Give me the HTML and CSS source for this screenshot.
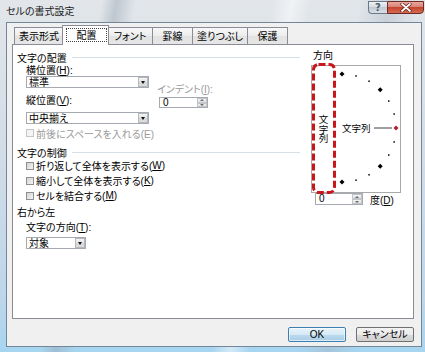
FILE: index.html
```html
<!DOCTYPE html>
<html lang="ja">
<head>
  <meta charset="utf-8">
  <title>セルの書式設定</title>
  <link rel="stylesheet" href="styles.css">
</head>
<body>
  <div class="window">
    <div class="titlebar">
      <span class="title">セルの書式設定</span>
      <div class="caption-buttons">
        <div class="cap-btn cap-help">?</div>
        <div class="cap-btn cap-close">
          <svg width="12" height="9" viewBox="0 0 12 9">
            <path d="M2 1 L10 8 M10 1 L2 8" stroke="#5a1d16" stroke-width="3.2" stroke-linecap="round"/>
            <path d="M2 1 L10 8 M10 1 L2 8" stroke="#fff" stroke-width="1.8" stroke-linecap="round"/>
          </svg>
        </div>
      </div>
    </div>

    <div class="client">
      <div class="tabs">
        <div class="tab tab-format">表示形式</div>
        <div class="tab tab-align tab-active"><span class="focus-ring">配置</span></div>
        <div class="tab tab-font">フォント</div>
        <div class="tab tab-border">罫線</div>
        <div class="tab tab-fill">塗りつぶし</div>
        <div class="tab tab-protect">保護</div>
      </div>

      <div class="panel">
        <div class="align-col">
          <div class="group-title">文字の配置</div>
          <div class="indented">
            <div class="position-row">
              <div class="position-left">
                <div class="label">横位置(<u>H</u>):</div>
                <div class="combo combo-wide"><span class="combo-value">標準</span><span class="combo-btn"></span></div>
                <div class="label gap-6">縦位置(<u>V</u>):</div>
                <div class="combo combo-wide gap-6"><span class="combo-value">中央揃え</span><span class="combo-btn"></span></div>
              </div>
              <div class="indent-box">
                <div class="label disabled">インデント(<u>I</u>):</div>
                <div class="spin indent-spin">
                  <span class="spin-value">0</span>
                  <span class="spin-btns"><span class="spin-up"></span><span class="spin-down"></span></span>
                </div>
              </div>
            </div>
            <div class="check check-space disabled"><span class="box"></span>前後にスペースを入れる(E)</div>
          </div>

          <div class="group-title control-title">文字の制御</div>
          <div class="indented">
            <div class="check"><span class="box"></span>折り返して全体を表示する(<u>W</u>)</div>
            <div class="check"><span class="box"></span>縮小して全体を表示する(<u>K</u>)</div>
            <div class="check"><span class="box"></span>セルを結合する(<u>M</u>)</div>
          </div>

          <div class="group-title rtl-title">右から左</div>
          <div class="indented">
            <div class="label direction-label">文字の方向(<u>T</u>):</div>
            <div class="combo combo-narrow"><span class="combo-value">対象</span><span class="combo-btn"></span></div>
          </div>
        </div>

        <div class="orient-col">
          <div class="orient-title">方向</div>
          <div class="orient-wrap">
            <div class="orient-box">
              <div class="vertical-cell">文字列</div>
              <svg class="dial" width="65" height="126" viewBox="0 0 65 126">
                <g fill="#000">
                  <path d="M7 5.5 L9.5 8 L7 10.5 L4.5 8 Z"/>
                  <path d="M45.2 21.3 L47.7 23.8 L45.2 26.3 L42.7 23.8 Z"/>
                  <path d="M45.2 97.7 L47.7 100.2 L45.2 102.7 L42.7 100.2 Z"/>
                  <path d="M7 113.5 L9.5 116 L7 118.5 L4.5 116 Z"/>
                  <rect x="20.3" y="9.2" width="1.5" height="1.5"/>
                  <rect x="33.3" y="14.5" width="1.5" height="1.5"/>
                  <rect x="53" y="34.3" width="1.5" height="1.5"/>
                  <rect x="58.4" y="47.3" width="1.5" height="1.5"/>
                  <rect x="58.4" y="75.2" width="1.5" height="1.5"/>
                  <rect x="53" y="88.3" width="1.5" height="1.5"/>
                  <rect x="33.3" y="108" width="1.5" height="1.5"/>
                  <rect x="20.3" y="113.4" width="1.5" height="1.5"/>
                </g>
                <text x="7" y="65.5" class="dial-text">文字列</text>
                <line x1="39" y1="62" x2="57" y2="62" stroke="#777" stroke-width="1.4"/>
                <path d="M61 59.5 L63.5 62 L61 64.5 L58.5 62 Z" fill="#a8262a"/>
              </svg>
            </div>
            <svg class="highlight" width="24" height="131" viewBox="0 0 24 131">
              <rect x="1.5" y="1.5" width="21" height="128" rx="5" fill="none" stroke="#c8161d" stroke-width="3" stroke-dasharray="7 3"/>
            </svg>
          </div>
          <div class="degree-row">
            <div class="spin degree-spin">
              <span class="spin-value">0</span>
              <span class="spin-btns"><span class="spin-up"></span><span class="spin-down"></span></span>
            </div>
            <span class="degree-label">度(<u>D</u>)</span>
          </div>
        </div>
      </div>

      <div class="buttons">
        <div class="button button-default">OK</div>
        <div class="button">キャンセル</div>
      </div>
    </div>
  </div>
</body>
</html>
```

FILE: styles.css
```css
body {
  margin: 0;
  font-family: "Liberation Sans", "Noto Sans CJK JP", sans-serif;
  font-size: 10px;
  font-feature-settings: "palt";
  color: #000;
}

u {
  text-underline-offset: 1px;
}

.window {
  width: 425px;
  height: 352px;
  box-sizing: border-box;
  padding: 0 3px 5px 6px;
  display: flex;
  flex-direction: column;
  background:
    linear-gradient(100deg, rgba(255,255,255,0) 21%, rgba(150,162,176,0.45) 24%, rgba(255,255,255,0) 28%,
      rgba(255,255,255,0) 56%, rgba(255,255,255,0.5) 60%, rgba(255,255,255,0) 64%,
      rgba(255,255,255,0) 74%, rgba(160,170,182,0.35) 80%, rgba(255,255,255,0) 86%),
    linear-gradient(#e2e6ea 0%, #d3dde7 40%, #bdd6ea 85%, #a6d5f0 100%);
}

/* title bar */
.titlebar {
  height: 22px;
  display: flex;
  align-items: flex-start;
}

.title {
  margin-top: 6px;
  line-height: 12px;
  color: #1b1b1b;
}

.caption-buttons {
  margin-left: auto;
  margin-right: -2px;
  margin-top: 1px;
  display: flex;
}

.cap-btn {
  height: 13px;
  display: flex;
  align-items: center;
  justify-content: center;
  box-sizing: border-box;
}

.cap-help {
  width: 19px;
  border: 1px solid #6b7889;
  border-right: none;
  border-radius: 0 0 0 4px;
  background: linear-gradient(#eef1f4, #d6dce3 45%, #c2cad4 50%, #d8dfe6);
  font-family: "DejaVu Sans", sans-serif;
  font-size: 10px;
  font-weight: bold;
  color: #4c5a6a;
}

.cap-close {
  width: 37px;
  border: 1px solid #6d2b22;
  border-radius: 0 0 4px 0;
  background: linear-gradient(#eaa89f, #d88275 45%, #c5452f 50%, #d46a50);
}

/* client area */
.client {
  flex: 1;
  display: flex;
  flex-direction: column;
  border: 1px solid #73869a;
  background: #f0f0f0;
  padding: 2px 7px 4px 5px;
}

.tabs {
  position: relative;
  z-index: 1;
  height: 19px;
  display: flex;
  align-items: flex-end;
  padding-left: 2px;
}

.tab {
  height: 17px;
  box-sizing: border-box;
  border: 1px solid #898c95;
  border-bottom: none;
  padding-top: 1px;
  background: linear-gradient(#f8f8f8, #ececec 50%, #e2e2e2 51%, #e6e6e6);
  display: flex;
  align-items: center;
  justify-content: center;
  line-height: 12px;
}

.tab + .tab {
  margin-left: -1px;
}

.tab-format { width: 50px; }
.tab-align { width: 47px; }
.tab-font { width: 46px; }
.tab-border { width: 41px; }
.tab-fill { width: 56px; }
.tab-protect { width: 41px; }

.tab.tab-active {
  position: relative;
  z-index: 2;
  height: 20px;
  margin-left: -2px;
  margin-right: -1px;
  margin-bottom: -1px;
  padding: 2px 1px 3px 3px;
  background: #fff;
  align-items: stretch;
}

.focus-ring {
  flex: 1;
  display: flex;
  align-items: center;
  justify-content: center;
  padding-top: 1px;
  border: 1px dotted #444;
}

.panel {
  flex: 1;
  display: flex;
  background: #fff;
  border: 1px solid #898c95;
  padding-left: 4px;
}

.align-col {
  width: 283px;
}

.group-title {
  height: 14px;
  padding-top: 1px;
  box-sizing: border-box;
  margin-top: 5px;
  display: flex;
  align-items: center;
}

.group-title::after {
  content: "";
  flex: 1;
  height: 1px;
  margin-left: 5px;
  background: #d5dfe5;
}

.control-title {
  height: 13px;
  margin-top: 6px;
}

.rtl-title {
  height: 13px;
  margin-top: 1px;
}

.rtl-title::after {
  display: none;
}

.indented {
  padding-left: 9px;
}

.label {
  height: 12px;
  line-height: 12px;
  padding-top: 1px;
  box-sizing: border-box;
}

.disabled {
  color: #9a9a9a;
}

.gap-6 {
  margin-top: 6px;
}

.position-row {
  display: flex;
}

.position-left {
  width: 122px;
}

.indent-box {
  margin-left: 9px;
  margin-top: 19px;
}

/* combo boxes */
.combo {
  height: 12px;
  box-sizing: border-box;
  border: 1px solid #a5a9b0;
  background: #fff;
  display: flex;
  align-items: stretch;
}

.combo-wide { width: 123px; }
.combo-narrow { width: 60px; margin-top: 4px; }

.combo-value {
  flex: 1;
  padding-left: 2px;
  line-height: 11px;
}

.combo-btn {
  width: 10px;
  box-sizing: border-box;
  border: 1px solid #b4b8be;
  background: linear-gradient(#f5f5f5, #e2e2e2 50%, #d6d6d6 51%, #dedede);
  display: flex;
  align-items: center;
  justify-content: center;
}

.combo-btn::after {
  content: "";
  border-left: 2.5px solid transparent;
  border-right: 2.5px solid transparent;
  border-top: 3px solid #111;
}

/* spin boxes */
.spin {
  height: 11px;
  box-sizing: border-box;
  border: 1px solid #a5a9b0;
  background: #fff;
  display: flex;
}

.indent-spin {
  width: 49px;
  margin-top: 2px;
  margin-left: 2px;
}

.spin-value {
  flex: 1;
  padding-left: 3px;
  line-height: 9px;
}

.spin-btns {
  width: 10px;
  display: flex;
  flex-direction: column;
}

.spin-up,
.spin-down {
  flex: 1;
  box-sizing: border-box;
  border: 1px solid #c2c6cc;
  background: linear-gradient(#f4f4f4, #e0e0e0);
  display: flex;
  align-items: center;
  justify-content: center;
}

.spin-up::after {
  content: "";
  border-left: 2px solid transparent;
  border-right: 2px solid transparent;
  border-bottom: 2px solid #6a6a6a;
}

.spin-down::after {
  content: "";
  border-left: 2px solid transparent;
  border-right: 2px solid transparent;
  border-top: 2px solid #6a6a6a;
}

/* check boxes */
.check {
  height: 15px;
  display: flex;
  align-items: center;
}

.check-space {
  height: 12px;
  margin-top: 3px;
}

.box {
  width: 8px;
  height: 8px;
  box-sizing: border-box;
  margin-right: 2px;
  border: 1px solid #8e8f8f;
  background: linear-gradient(135deg, #d4d4d4, #f4f4f4);
}

.check-space .box {
  border-color: #c6c6c6;
  background: #f4f4f4;
}

.direction-label {
  margin-top: 4px;
}

/* orientation */
.orient-col {
  width: 90px;
  margin-left: 11px;
}

.orient-title {
  height: 12px;
  line-height: 12px;
  margin-top: 5px;
  margin-left: 2px;
}

.orient-wrap {
  position: relative;
  margin-top: 3px;
}

.orient-box {
  height: 128px;
  box-sizing: border-box;
  border: 1px solid #a9a9a9;
  display: flex;
}

.vertical-cell {
  width: 23px;
  writing-mode: vertical-rl;
  text-orientation: upright;
  display: flex;
  align-items: center;
  justify-content: center;
  font-family: "Noto Sans CJK JP", sans-serif;
  font-size: 9.5px;
  line-height: 10px;
}

.dial {
  display: block;
}

.dial-text {
  font-family: "Noto Sans CJK JP", sans-serif;
  font-size: 9.5px;
  fill: #000;
}

.highlight {
  position: absolute;
  left: 1px;
  top: -2px;
}

.degree-row {
  display: flex;
  align-items: center;
  height: 12px;
  margin-left: 4px;
}

.degree-spin {
  width: 48px;
  height: 12px;
}

.degree-label {
  margin-left: 7px;
}

/* bottom buttons */
.buttons {
  display: flex;
  justify-content: flex-end;
  gap: 10px;
  margin-top: 8px;
}

.button {
  width: 58px;
  height: 15px;
  box-sizing: border-box;
  border: 1px solid #707070;
  border-radius: 2px;
  background: linear-gradient(#f2f2f2, #ebebeb 50%, #dddddd 51%, #cfcfcf);
  display: flex;
  align-items: center;
  justify-content: center;
  line-height: 12px;
  padding-top: 1px;
}

.button-default {
  border-color: #3c7fb1;
  background: linear-gradient(#eaf4fa, #d6e9f5 50%, #bcdaee 51%, #a9cde6);
  box-shadow: inset 0 0 0 1px rgba(255,255,255,0.6);
}
```
